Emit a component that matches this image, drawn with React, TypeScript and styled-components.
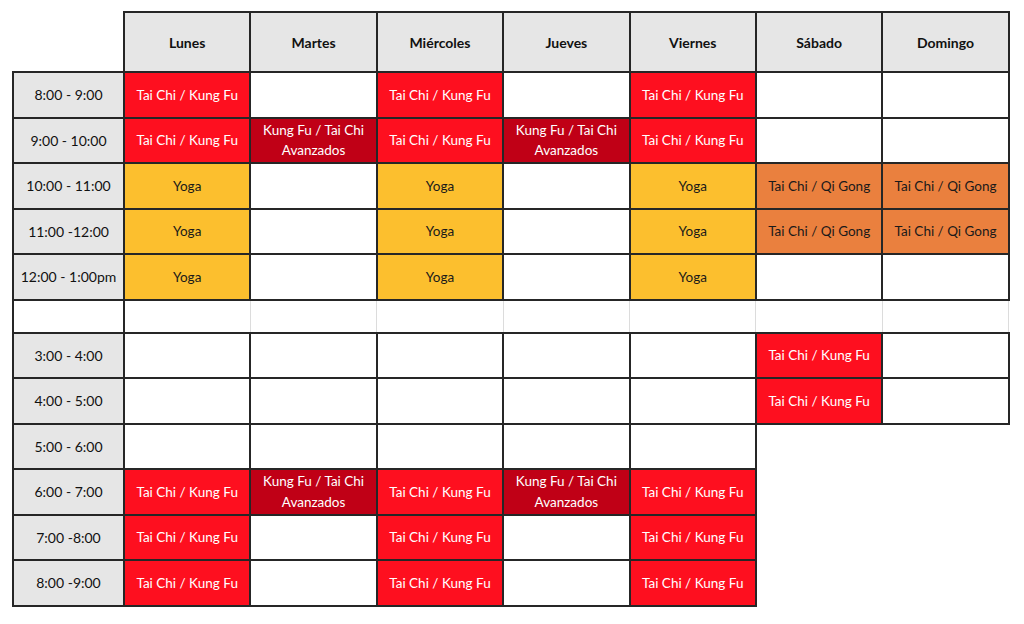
import React from "react";
import styled, { createGlobalStyle } from "styled-components";

type Kind = "red" | "dark" | "yellow" | "orange" | "empty" | "none";

const GlobalStyle = createGlobalStyle`
  html, body {
    margin: 0;
    padding: 0;
    background: #ffffff;
  }
`;

const fills: Record<Kind, string> = {
  red: "#fe0f1f",
  dark: "#c00016",
  yellow: "#fcbf2e",
  orange: "#ea803e",
  empty: "#ffffff",
  none: "transparent",
};

const Page = styled.div`
  padding: 11px 0 0 12px;
  font-family: Lato, "Liberation Sans", Arial, sans-serif;
`;

const Table = styled.table`
  border-collapse: collapse;
  table-layout: fixed;
  width: 996px;
`;

const Col = styled.col<{ $w: number }>`
  width: ${(p) => p.$w}px;
`;

const line = "2px solid #262626";
const faint = "1px solid #dcdcdc";

const HeadCell = styled.th<{ $blank?: boolean }>`
  height: 58px;
  padding: 0;
  background: ${(p) => (p.$blank ? "transparent" : "#e6e6e6")};
  border: ${(p) => (p.$blank ? "none" : line)};
  font-size: 14px;
  font-weight: 700;
  color: #111;
  text-align: center;
`;

const Row = styled.tr<{ $gap?: boolean }>`
  height: ${(p) => (p.$gap ? 33 : 45.5)}px;
`;

const TimeCell = styled.td<{ $gap?: boolean }>`
  padding: 0;
  background: ${(p) => (p.$gap ? "#ffffff" : "#e6e6e6")};
  border: ${line};
  font-size: 14px;
  color: #111;
  text-align: center;
  white-space: nowrap;
`;

const Slot = styled.td<{ $kind: Kind; $gap?: boolean }>`
  padding: 0;
  background: ${(p) => fills[p.$kind]};
  border: ${(p) => (p.$kind === "none" ? "none" : p.$gap ? faint : line)};
  font-size: 13.5px;
  line-height: 20.5px;
  text-align: center;
  white-space: nowrap;
  color: ${(p) => (p.$kind === "yellow" || p.$kind === "orange" ? "#1a1a1a" : "#ffffff")};
`;

const days = ["Lunes", "Martes", "Miércoles", "Jueves", "Viernes", "Sábado", "Domingo"];

const labels: Record<Kind, React.ReactNode> = {
  red: "Tai Chi / Kung Fu",
  dark: (
    <>
      Kung Fu / Tai Chi
      <br />
      Avanzados
    </>
  ),
  yellow: "Yoga",
  orange: "Tai Chi / Qi Gong",
  empty: null,
  none: null,
};

const R: Kind = "red";
const D: Kind = "dark";
const Y: Kind = "yellow";
const O: Kind = "orange";
const E: Kind = "empty";
const N: Kind = "none";

const morning: [string, Kind[]][] = [
  ["8:00 - 9:00", [R, E, R, E, R, E, E]],
  ["9:00 - 10:00", [R, D, R, D, R, E, E]],
  ["10:00 - 11:00", [Y, E, Y, E, Y, O, O]],
  ["11:00 -12:00", [Y, E, Y, E, Y, O, O]],
  ["12:00 - 1:00pm", [Y, E, Y, E, Y, E, E]],
];

const evening: [string, Kind[]][] = [
  ["3:00 - 4:00", [E, E, E, E, E, R, E]],
  ["4:00 - 5:00", [E, E, E, E, E, R, E]],
  ["5:00 - 6:00", [E, E, E, E, E, N, N]],
  ["6:00 - 7:00", [R, D, R, D, R, N, N]],
  ["7:00 -8:00", [R, E, R, E, R, N, N]],
  ["8:00 -9:00", [R, E, R, E, R, N, N]],
];

const ScheduleRow = ({ time, cells }: { time: string; cells: Kind[] }) => (
  <Row>
    <TimeCell>{time}</TimeCell>
    {cells.map((k, i) => (
      <Slot key={i} $kind={k}>
        {labels[k]}
      </Slot>
    ))}
  </Row>
);

export default function App() {
  return (
    <Page>
      <GlobalStyle />
      <Table>
        <colgroup>
          <Col $w={111} />
          {days.map((d) => (
            <Col key={d} $w={126.4} />
          ))}
        </colgroup>
        <thead>
          <tr>
            <HeadCell $blank />
            {days.map((d) => (
              <HeadCell key={d}>{d}</HeadCell>
            ))}
          </tr>
        </thead>
        <tbody>
          {morning.map(([t, c]) => (
            <ScheduleRow key={t} time={t} cells={c} />
          ))}
          <Row $gap>
            <TimeCell $gap />
            {days.map((d) => (
              <Slot key={d} $kind="empty" $gap />
            ))}
          </Row>
          {evening.map(([t, c]) => (
            <ScheduleRow key={"e" + t} time={t} cells={c} />
          ))}
        </tbody>
      </Table>
    </Page>
  );
}
